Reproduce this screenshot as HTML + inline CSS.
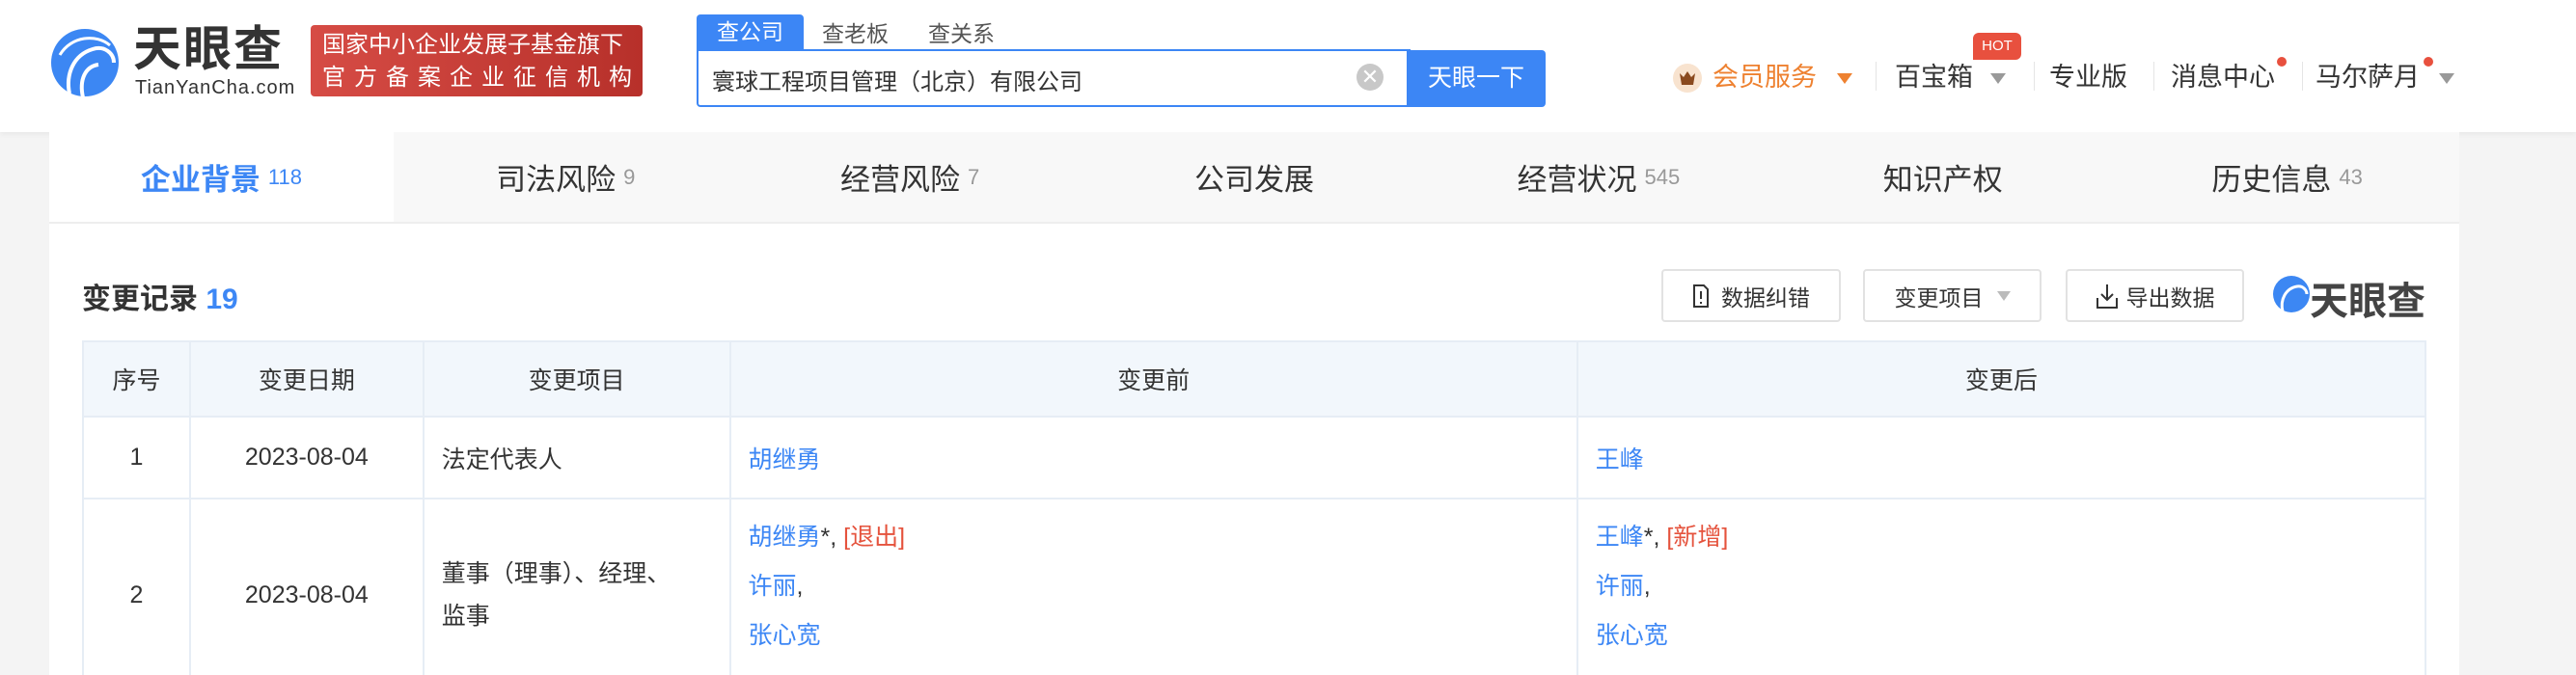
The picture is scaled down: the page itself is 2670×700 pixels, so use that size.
<!DOCTYPE html>
<html style="width:2670px;height:700px;overflow:hidden"><head><meta charset="utf-8"><style>
*{margin:0;padding:0;box-sizing:border-box}
body{width:2670px;height:700px;overflow:hidden;background:#f4f4f4;font-family:"Liberation Sans","Noto Sans CJK SC",sans-serif;color:#333;position:relative}
.a{position:absolute;white-space:nowrap}
.hdr{position:absolute;left:0;top:0;width:2670px;height:137px;background:#fff;box-shadow:0 2px 6px rgba(0,0,0,.06)}
.nav{font-size:27px;color:#333;top:62px;line-height:36px}
.sep{position:absolute;top:64px;width:1px;height:30px;background:#e5e5e5}
.tri{position:absolute;width:0;height:0;border-left:8px solid transparent;border-right:8px solid transparent;border-top:11px solid #999}
.card{position:absolute;left:51px;top:137px;width:2498px;height:563px;background:#fff}
.tabs{position:absolute;left:0;top:0;width:2498px;height:95px;background:#f8f8f8;border-bottom:2px solid #eee;display:flex}
.tab{width:357px;height:93px;display:flex;align-items:center;justify-content:center;font-size:31px;color:#333}
.tab span{font-size:22px;color:#999;margin-left:8px}
.btn{position:absolute;top:279px;height:55px;border:2px solid #e2e2e2;border-radius:4px;background:#fff;font-size:23px;color:#333;display:flex;align-items:center;justify-content:center}
.tbl{position:absolute;left:85px;top:353px;width:2430px;height:347px;overflow:hidden}
table{border-collapse:collapse;font-size:25px;color:#333}
td,th{border:2px solid #e6edf5;font-weight:normal}
th{background:#f2f7fc;height:78px}
.b{color:#3d87f5}.r{color:#e5533d}
</style></head><body>
<div class="hdr"></div>
<svg class="a" style="left:52px;top:27px" width="72" height="76" viewBox="0 0 72 76">
<circle cx="36" cy="38" r="35" fill="#3c87f3"/>
<path d="M20 70 C16 50 24 30 44 24 C56 20 66 28 66 38" stroke="#fff" stroke-width="4" fill="none"/>
<path d="M34 74 C30 56 36 42 50 40" stroke="#fff" stroke-width="4" fill="none"/>
<path d="M10 30 C22 10 48 8 62 20" stroke="#fff" stroke-width="3" fill="none"/>
</svg>
<div class="a" style="left:138px;top:26px;font-size:50px;line-height:50px;font-weight:bold;color:#333;letter-spacing:2px">天眼查</div>
<div class="a" style="left:140px;top:81px;font-size:20px;line-height:20px;color:#333;letter-spacing:1px">TianYanCha.com</div>
<div class="a" style="left:322px;top:26px;width:344px;height:74px;border-radius:4px;background:linear-gradient(90deg,#d64c45,#b7302a);color:#fff;font-size:24px;line-height:34px;padding:4px 0 0 12px">国家中小企业发展子基金旗下<br><span style="letter-spacing:9px">官方备案企业征信机构</span></div>
<div class="a" style="left:722px;top:15px;width:111px;height:37px;background:#3c86f5;color:#fff;font-size:23px;text-align:center;line-height:37px;border-radius:4px 4px 0 0">查公司</div>
<div class="a" style="left:852px;top:16px;font-size:23px;color:#555">查老板</div>
<div class="a" style="left:962px;top:16px;font-size:23px;color:#555">查关系</div>
<div class="a" style="left:722px;top:51px;width:740px;height:60px;border:2px solid #3c86f5;border-radius:0 0 0 4px;background:#fff"></div>
<div class="a" style="left:738px;top:65px;font-size:24px;color:#333">寰球工程项目管理（北京）有限公司</div>
<div class="a" style="left:1406px;top:66px;width:28px;height:28px;border-radius:50%;background:#c8c8c8;color:#fff;font-size:22px;text-align:center;line-height:28px">✕</div>
<div class="a" style="left:1458px;top:52px;width:144px;height:59px;background:#3c86f5;border-radius:0 4px 4px 0;color:#fff;font-size:25px;text-align:center;line-height:59px">天眼一下</div>
<div class="a" style="left:1734px;top:66px;width:30px;height:30px;border-radius:50%;background:#f8e3cf"></div>
<svg class="a" style="left:1740px;top:73px" width="18" height="16" viewBox="0 0 18 16"><path d="M1 3 L5 7 L9 1 L13 7 L17 3 L15 15 L3 15Z" fill="#8a4a1f"/></svg>
<div class="a nav" style="left:1775px;color:#ee8130">会员服务</div>
<div class="tri" style="left:1904px;top:76px;border-top-color:#ee8130"></div>
<div class="sep" style="left:1944px"></div>
<div class="a nav" style="left:1964px">百宝箱</div>
<div class="tri" style="left:2063px;top:76px"></div>
<div class="a" style="left:2045px;top:34px;height:28px;background:#e8503e;border-radius:6px 6px 6px 0;color:#fff;font-size:15px;line-height:28px;text-align:center;width:50px">HOT</div>
<div class="sep" style="left:2108px"></div>
<div class="a nav" style="left:2124px">专业版</div>
<div class="sep" style="left:2232px"></div>
<div class="a nav" style="left:2250px">消息中心</div>
<div class="a" style="left:2360px;top:59px;width:10px;height:10px;border-radius:50%;background:#e8503e"></div>
<div class="sep" style="left:2386px"></div>
<div class="a nav" style="left:2400px">马尔萨月</div>
<div class="a" style="left:2512px;top:59px;width:10px;height:10px;border-radius:50%;background:#e8503e"></div>
<div class="tri" style="left:2528px;top:76px"></div>

<div class="card">
<div class="tabs">
<div class="tab" style="background:#fff;color:#3d87f5;font-weight:bold">企业背景<span style="color:#3d87f5;font-weight:normal">118</span></div>
<div class="tab">司法风险<span>9</span></div>
<div class="tab">经营风险<span>7</span></div>
<div class="tab">公司发展</div>
<div class="tab">经营状况<span>545</span></div>
<div class="tab">知识产权</div>
<div class="tab">历史信息<span>43</span></div>
</div>
</div>
<div class="a" style="left:85px;top:285px;font-size:30px;font-weight:bold;color:#333">变更记录 <span style="color:#3d87f5">19</span></div>
<div class="btn" style="left:1722px;width:186px"><svg width="18" height="26" viewBox="0 0 18 26" style="margin-right:12px"><path d="M2 2 H12 L16 6 V24 H2Z" fill="none" stroke="#333" stroke-width="2"/><path d="M9 8 V16 M9 19 V21" stroke="#333" stroke-width="2"/></svg>数据纠错</div>
<div class="btn" style="left:1931px;width:185px">变更项目<span style="display:inline-block;margin-left:14px;border-left:7px solid transparent;border-right:7px solid transparent;border-top:10px solid #bbb"></span></div>
<div class="btn" style="left:2141px;width:185px"><svg width="24" height="28" viewBox="0 0 24 28" style="margin-right:8px"><path d="M12 2 V18 M6 12 L12 18 L18 12 M2 16 V26 H22 V16" fill="none" stroke="#333" stroke-width="2"/></svg>导出数据</div>
<svg class="a" style="left:2355px;top:285px" width="40" height="40" viewBox="0 0 40 40"><circle cx="20" cy="20" r="19" fill="#3c87f3"/><path d="M11 38 C8 26 14 14 26 12 C32 11 36 16 36 20" stroke="#fff" stroke-width="3" fill="none"/></svg>
<div class="a" style="left:2394px;top:280px;font-size:40px;font-weight:bold;color:#444">天眼查</div>
<div class="tbl"><table>
<tr><th style="width:111px">序号</th><th style="width:242px">变更日期</th><th style="width:318px">变更项目</th><th style="width:879px">变更前</th><th style="width:880px">变更后</th></tr>
<tr style="height:85px"><td style="text-align:center">1</td><td style="text-align:center">2023-08-04</td><td style="padding-left:18px">法定代表人</td><td style="padding-left:18px" class="b">胡继勇</td><td style="padding-left:18px" class="b">王峰</td></tr>
<tr style="height:200px"><td style="text-align:center">2</td><td style="text-align:center">2023-08-04</td><td style="padding-left:18px;line-height:44px">董事（理事）、经理、<br>监事</td>
<td style="padding-left:18px;line-height:51px;vertical-align:top;padding-top:14px"><span class="b">胡继勇</span>*, <span class="r">[退出]</span><br><span class="b">许丽</span>,<br><span class="b">张心宽</span></td>
<td style="padding-left:18px;line-height:51px;vertical-align:top;padding-top:14px"><span class="b">王峰</span>*, <span class="r">[新增]</span><br><span class="b">许丽</span>,<br><span class="b">张心宽</span></td></tr>
</table></div>
</body></html>
